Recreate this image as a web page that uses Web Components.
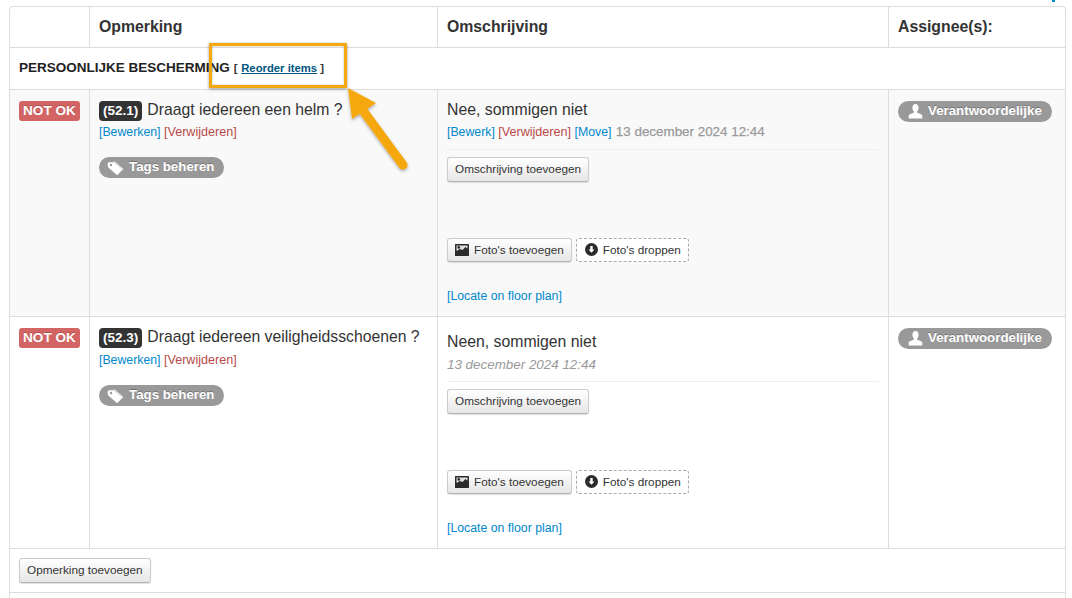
<!DOCTYPE html>
<html><head><meta charset="utf-8"><title>Checklist</title>
<style>
html,body{margin:0;padding:0;background:#fff;height:598px;overflow:hidden}
body{font-family:"Liberation Sans",Arial,sans-serif;color:#333;position:relative}
</style></head><body>
<check-page>
  <check-head></check-head>
  <check-section title-text="PERSOONLIJKE BESCHERMING"></check-section>
  <check-row num="(52.1)" q="Draagt iedereen een helm ?" desc="Nee, sommigen niet" shade="1" meta="full" h="227" dtop="11" tagm="18" lm="4"></check-row>
  <check-row num="(52.3)" q="Draagt iedereen veiligheidsschoenen ?" desc="Neen, sommigen niet" meta="date" h="232" dtop="16" tagm="18" lm="5"></check-row>
  <check-foot></check-foot>
</check-page>
<check-callout></check-callout>
<script>
const BTN=`.btn{display:inline-flex;align-items:center;box-sizing:border-box;height:25px;padding:0 7px 2px;font-size:11.75px;color:#333;background:linear-gradient(#fff,#e6e6e6);border:1px solid #ccc;border-bottom-color:#b3b3b3;border-radius:3px;box-shadow:0 1px 1px rgba(0,0,0,.12);white-space:nowrap}`;
const GRID=`display:grid;grid-template-columns:79px 348px 451px 177px;`;
function def(name,render){customElements.define(name,class extends HTMLElement{connectedCallback(){if(!this.shadowRoot){this.attachShadow({mode:'open'}).innerHTML=render(this)}}})}
def('check-page',()=>`<style>:host{display:block;box-sizing:border-box;width:1057px;margin:6px 0 0 9px;border:1px solid #ddd;border-bottom:0;border-radius:4px 4px 0 0;height:592px}</style><slot></slot>`);
def('check-head',()=>`<style>:host{${GRID}height:41px;box-sizing:border-box;border-bottom:1px solid #ddd;font-size:15.8px;font-weight:bold;color:#333}
div{padding:11px 9px 0;border-left:1px solid #ddd;line-height:18px}div:first-of-type{border-left:0}</style>
<div></div><div>Opmerking</div><div>Omschrijving</div><div>Assignee(s):</div>`);
def('check-section',el=>`<style>:host{display:flex;align-items:baseline;height:42px;box-sizing:border-box;border-bottom:1px solid #ddd;padding:12px 9px 0;font-size:13.5px;font-weight:bold;line-height:16px;color:#222}
.r{font-size:11.3px;margin-left:4px;color:#333}a{color:#005580;text-decoration:underline;margin:0 0 0 .5px}</style>
<span>${el.getAttribute('title-text')}</span><span class="r">[ <a>Reorder items</a> ]</span>`);
const TAG=`<svg width="18" height="16" viewBox="0 0 18 16"><path fill="#fff" opacity=".75" d="M6 1.500h2l8.500 7.500-1.500 1.800z"/><path fill="#fff" d="M.5 4 1.500 2.200H6.500l8 7a1 1 0 0 1 .1 1.400l-3.600 4a1 1 0 0 1-1.400.1l-8.300-7.300z"/><circle cx="4" cy="5" r="1.200" fill="#999"/></svg>`;
const USER=`<svg width="15" height="15" viewBox="0 0 15 15"><path fill="#fff" d="M7.500 0C5.600 0 4.400 1.500 4.400 3.700c0 1.500.6 3 1.500 3.700v1.100L1.500 10.600c-.6.300-.8.800-.8 1.400V14.500h13.600V12c0-.6-.2-1.100-.8-1.400L9.100 8.500V7.400c.9-.7 1.500-2.200 1.500-3.700C10.600 1.500 9.400 0 7.500 0z"/></svg>`;
const PIC=`<svg width="14" height="12" viewBox="0 0 14 12"><rect width="14" height="12" rx=".5" fill="#2b2b2b"/><path fill="#ddd" d="M1.500 1.500h11v3.200L10.500 3 7.500 6 5 5 1.500 7z"/><circle cx="3.800" cy="3.400" r="1.300" fill="#2b2b2b"/></svg>`;
const DOWN=`<svg width="13" height="13" viewBox="0 0 13 13"><circle cx="6.500" cy="6.500" r="6.500" fill="#2b2b2b"/><path fill="#fff" d="M5.300 3h2.400v3.500h1.800L6.500 9.800 3.500 6.500h1.800z"/></svg>`;
def('check-row',el=>{const full=el.getAttribute('meta')==='full';const shade=el.hasAttribute('shade');
return `<style>:host{${GRID}height:${el.getAttribute('h')}px;box-sizing:border-box;border-bottom:1px solid #ddd;background:${shade?'#f9f9f9':'#fff'}}
.c{border-left:1px solid #ddd;padding:11px 9px 0;min-width:0}.c:first-of-type{border-left:0}
.no{display:inline-block;background:#d26464;color:#fff;font-size:13.6px;font-weight:bold;line-height:19px;height:20px;padding:0 4px;border-radius:3px;white-space:nowrap;text-shadow:0 -1px 0 rgba(0,0,0,.2)}
.q{display:flex;align-items:center;gap:5px;font-size:15.75px;height:20px;color:#333;white-space:nowrap}
.q>span:last-child{position:relative;top:-1px}
.num{background:#333;color:#fff;font-weight:bold;font-size:13.5px;line-height:20px;padding:0 4px;border-radius:4px}
.l{font-size:12.3px;line-height:14px;margin-top:${el.getAttribute('lm')}px;white-space:nowrap}
.b{color:#0088cc}.d{color:#b94a48;font-size:12.6px}
.pill{display:inline-flex;align-items:center;background:#999;color:#fff;font-weight:bold;font-size:13.3px;height:21px;border-radius:11px;white-space:nowrap;box-sizing:border-box;text-shadow:0 -1px 0 rgba(0,0,0,.25);vertical-align:top}
.pill>span{position:relative;top:-1px}
.pill.tg{padding:0 10px 0 8px;gap:4px}.pill.us{padding:0 10px 0 10px;gap:5px}
.tag{margin-top:${el.getAttribute('tagm')}px;height:21px}
.t{font-size:15.8px;line-height:20px;color:#333;margin-top:-1px;white-space:nowrap}
.meta{font-size:12.3px;line-height:16px;margin-top:4px;white-space:nowrap;height:17px}
.date{color:#999;font-size:13.4px;-webkit-text-stroke:.25px #999;margin-left:1px}.it{color:#999;font-size:13.4px;font-style:italic;position:relative;top:1px}
hr{border:0;border-top:1px solid #eee;margin:8px 0 7px;}
${BTN}
.ph{display:flex;gap:4px;margin-top:56px}.ph .btn{height:24px;gap:5px;padding-bottom:1px}
.drop{display:inline-flex;align-items:center;gap:5px;box-sizing:border-box;height:24px;padding:0 7px 1px 8px;font-size:11.75px;color:#333;background:#fff;border:1px dashed #aaa;border-radius:3px;white-space:nowrap}
.loc{font-size:12.3px;line-height:14px;margin-top:27px}
.d3{padding-top:${el.getAttribute('dtop')}px}
</style>
<div class="c"><span class="no">NOT OK</span></div>
<div class="c"><div class="q"><span class="num">${el.getAttribute('num')}</span><span>${el.getAttribute('q')}</span></div>
<div class="l"><span class="b">[Bewerken]</span> <span class="d">[Verwijderen]</span></div>
<div class="tag"><span class="pill tg">${TAG}<span>Tags beheren</span></span></div></div>
<div class="c d3"><div class="t">${el.getAttribute('desc')}</div>
<div class="meta">${full?`<span class="b">[Bewerk]</span> <span class="d">[Verwijderen]</span> <span class="b">[Move]</span> <span class="date">13 december 2024 12:44</span>`:`<span class="it">13 december 2024 12:44</span>`}</div>
<hr><span class="btn">Omschrijving toevoegen</span>
<div class="ph"><span class="btn">${PIC}<span>Foto's toevoegen</span></span><span class="drop">${DOWN}<span>Foto's droppen</span></span></div>
<div class="loc"><span class="b">[Locate on floor plan]</span></div></div>
<div class="c"><span class="pill us">${USER}<span>Verantwoordelijke</span></span></div>`});
def('check-foot',()=>`<style>:host{display:block;height:44px;box-sizing:border-box;border-bottom:1px solid #ddd;padding:9px 9px 0}${BTN}</style><span class="btn">Opmerking toevoegen</span>`);
def('check-callout',()=>`<style>:host{position:absolute;left:0;top:0;width:1072px;height:598px;pointer-events:none;display:block}
.box{position:absolute;left:209px;top:43px;width:138px;height:45px;box-sizing:border-box;border:3px solid #f5a80f;box-shadow:0 1px 3px rgba(0,0,0,.4),inset 0 0 2px rgba(0,0,0,.3)}
svg{position:absolute;left:340px;top:80px}
.dot{position:absolute;left:1052px;top:0;width:3px;height:2px;background:#0088cc}</style>
<div class="dot"></div><div class="box"></div>
<svg width="80" height="100" viewBox="340 80 80 100"><defs><filter id="s" x="-30%" y="-30%" width="160%" height="160%"><feDropShadow dx="0" dy="1.500" stdDeviation="1.500" flood-opacity=".35"/></filter></defs>
<g filter="url(#s)"><path fill="#f5a80f" d="M348 88 376 103 352 119z"/><path d="M364 112 403 165" fill="none" stroke="#f5a80f" stroke-width="9" stroke-linecap="round"/></g></svg>`);
</script></body></html>
